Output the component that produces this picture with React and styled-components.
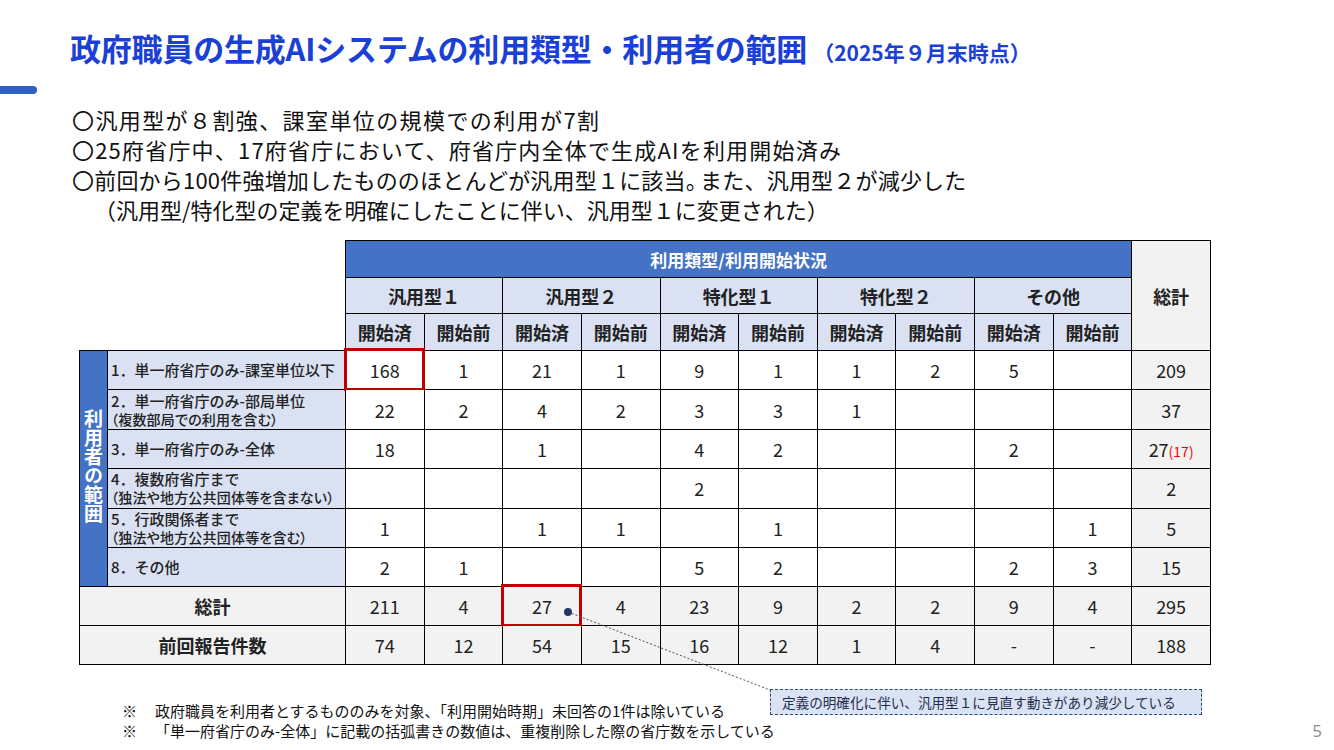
import React from "react";
import styled, { createGlobalStyle } from "styled-components";

const GlobalStyle = createGlobalStyle`
  html, body {
    margin: 0;
    padding: 0;
    background: #ffffff;
  }
  body {
    font-family: "Noto Sans CJK JP", "Noto Sans", sans-serif;
    color: #1a1a1a;
  }
`;

const groups = ["汎用型１", "汎用型２", "特化型１", "特化型２", "その他"];

const rows = [
  { label: ["1．単一府省庁のみ-課室単位以下"], vals: ["168", "1", "21", "1", "9", "1", "1", "2", "5", ""], total: "209", mark: 0 },
  { label: ["2．単一府省庁のみ-部局単位", "（複数部局での利用を含む）"], vals: ["22", "2", "4", "2", "3", "3", "1", "", "", ""], total: "37" },
  { label: ["3．単一府省庁のみ-全体"], vals: ["18", "", "1", "", "4", "2", "", "", "2", ""], total: "27", sub: "(17)" },
  { label: ["4．複数府省庁まで", "（独法や地方公共団体等を含まない）"], vals: ["", "", "", "", "2", "", "", "", "", ""], total: "2" },
  { label: ["5．行政関係者まで", "（独法や地方公共団体等を含む）"], vals: ["1", "", "1", "1", "", "1", "", "", "", "1"], total: "5" },
  { label: ["8．その他"], vals: ["2", "1", "", "", "5", "2", "", "", "2", "3"], total: "15" },
];

const totals = ["211", "4", "27", "4", "23", "9", "2", "2", "9", "4"];
const previous = ["74", "12", "54", "15", "16", "12", "1", "4", "-", "-"];

const App = () => {
  return (
    <Page>
      <GlobalStyle />
      <TitleRow>
        <Title>政府職員の生成AIシステムの利用類型・利用者の範囲</Title>
        <SubTitle>（2025年９月末時点）</SubTitle>
      </TitleRow>
      <AccentBar />

      <Bullets>
        <Bullet $ls="1.4px">〇汎用型が８割強、課室単位の規模での利用が7割</Bullet>
        <Bullet $ls="1.2px">〇25府省庁中、17府省庁において、府省庁内全体で生成AIを利用開始済み</Bullet>
        <Bullet $ls="0.2px">
          〇前回から100件強増加したもののほとんどが汎用型１に該当<Tight>。</Tight>また、汎用型２が減少した
        </Bullet>
        <Bullet $indent>（汎用型/特化型の定義を明確にしたことに伴い、汎用型１に変更された）</Bullet>
      </Bullets>

      <Table>
        <colgroup>
          <col style={{ width: 28 }} />
          <col style={{ width: 238 }} />
          {Array.from({ length: 11 }).map((_, i) => (
            <col key={i} />
          ))}
        </colgroup>
        <thead>
          <tr style={{ height: 37 }}>
            <Blank rowSpan={3} colSpan={2} />
            <BlueHead colSpan={10}>利用類型/利用開始状況</BlueHead>
            <GrayHead rowSpan={3}>総計</GrayHead>
          </tr>
          <tr style={{ height: 36 }}>
            {groups.map((g) => (
              <LightHead key={g} colSpan={2}>
                {g}
              </LightHead>
            ))}
          </tr>
          <tr style={{ height: 37 }}>
            {groups.map((g) => (
              <React.Fragment key={g}>
                <LightHead>開始済</LightHead>
                <LightHead>開始前</LightHead>
              </React.Fragment>
            ))}
          </tr>
        </thead>
        <tbody>
          {rows.map((r, ri) => (
            <tr key={ri} style={{ height: 39.4 }}>
              {ri === 0 && (
                <SideLabel rowSpan={6}>
                  <span>利用者の範囲</span>
                </SideLabel>
              )}
              <RowLabel>
                <div>{r.label[0]}</div>
                {r.label[1] && <SubLabel>{r.label[1]}</SubLabel>}
              </RowLabel>
              {r.vals.map((v, i) => (
                <Cell key={i} $marked={r.mark === i}>
                  {v}
                </Cell>
              ))}
              <Cell $gray>
                {r.total}
                {r.sub && <Note>{r.sub}</Note>}
              </Cell>
            </tr>
          ))}
          <tr style={{ height: 39 }}>
            <FootHead colSpan={2}>総計</FootHead>
            {totals.map((v, i) => (
              <Cell key={i} $gray $marked={i === 2}>
                {v}
              </Cell>
            ))}
            <Cell $gray>295</Cell>
          </tr>
          <tr style={{ height: 39 }}>
            <FootHead colSpan={2}>前回報告件数</FootHead>
            {previous.map((v, i) => (
              <Cell key={i} $gray>
                {v}
              </Cell>
            ))}
            <Cell $gray>188</Cell>
          </tr>
        </tbody>
      </Table>

      <BottomRow>
        <Notes>
          <NoteLine>
            <span>※</span>
            <span>政府職員を利用者とするもののみを対象、「利用開始時期」未回答の1件は除いている</span>
          </NoteLine>
          <NoteLine>
            <span>※</span>
            <span>「単一府省庁のみ-全体」に記載の括弧書きの数値は、重複削除した際の省庁数を示している</span>
          </NoteLine>
        </Notes>
        <Callout>定義の明確化に伴い、汎用型１に見直す動きがあり減少している</Callout>
        <PageNum>5</PageNum>
      </BottomRow>

      <Leader width="1334" height="750" viewBox="0 0 1334 750">
        <line x1="568" y1="612" x2="770" y2="690" stroke="#44546a" strokeWidth="1" strokeDasharray="2 2" />
        <circle cx="568" cy="612" r="4" fill="#1f3864" />
      </Leader>
    </Page>
  );
};

export default App;

const Page = styled.div`
  position: relative;
  width: 1334px;
  height: 750px;
  overflow: hidden;
  background: #fff;
`;

const TitleRow = styled.div`
  display: flex;
  align-items: baseline;
  gap: 6px;
  padding: 29px 0 0 70px;
  white-space: nowrap;
`;

const Title = styled.h1`
  margin: 0;
  font-size: 31px;
  line-height: 37px;
  font-weight: 700;
  color: #1a40d6;
  letter-spacing: -0.2px;
`;

const SubTitle = styled.span`
  font-size: 21px;
  font-weight: 700;
  color: #1a40d6;
`;

const AccentBar = styled.div`
  width: 37px;
  height: 8px;
  margin-top: 19px;
  background: #2f5fc2;
  border-radius: 0 4px 4px 0;
`;

const Bullets = styled.ul`
  list-style: none;
  margin: 10px 0 0 72px;
  padding: 0;
  font-size: 22px;
  line-height: 30px;
  color: #111;
  white-space: nowrap;
`;

const Bullet = styled.li`
  letter-spacing: ${(p) => p.$ls || "0"};
  padding-left: ${(p) => (p.$indent ? "22px" : "0")};
`;

const Tight = styled.span`
  letter-spacing: -0.45em;
  margin-right: 0.1em;
`;

const Table = styled.table`
  margin: 16px 0 0 79px;
  width: 1132px;
  table-layout: fixed;
  border-collapse: collapse;
  font-size: 18px;
  td,
  th {
    border: 1px solid #000;
    padding: 0;
    text-align: center;
    vertical-align: middle;
  }
`;

const Blank = styled.th`
  && {
    border: none;
  }
  background: #fff;
`;

const BlueHead = styled.th`
  background: #4472c4;
  color: #fff;
  font-size: 17px;
  font-weight: 700;
`;

const LightHead = styled.th`
  background: #d9e1f2;
  color: #222;
  font-size: 18px;
  font-weight: 700;
`;

const GrayHead = styled.th`
  background: #f2f2f2;
  color: #222;
  font-size: 18px;
  font-weight: 700;
`;

const SideLabel = styled.td`
  background: #4472c4;
  color: #fff;
  span {
    display: inline-block;
    writing-mode: vertical-rl;
    text-orientation: upright;
    font-size: 19px;
    font-weight: 700;
    line-height: 1;
  }
`;

const RowLabel = styled.td`
  && {
    text-align: left;
    padding-left: 3px;
  }
  background: #d9e1f2;
  font-size: 15px;
  line-height: 18px;
  font-weight: 500;
  color: #222;
  white-space: nowrap;
  overflow: hidden;
`;

const SubLabel = styled.div`
  font-size: 14px;
  font-feature-settings: "palt";
  letter-spacing: 0.2px;
`;

const Cell = styled.td`
  position: relative;
  background: ${(p) => (p.$gray ? "#f2f2f2" : "#fff")};
  color: #222;
  font-size: 18px;
  ${(p) =>
    p.$marked &&
    `
    &::after {
      content: "";
      position: absolute;
      inset: -3px -1px -2px -2px;
      border: 3px solid #c00000;
      pointer-events: none;
    }
  `}
`;

const Note = styled.span`
  color: #ff0000;
  font-size: 14px;
`;

const FootHead = styled.td`
  background: #f2f2f2;
  font-size: 18px;
  font-weight: 700;
  color: #222;
`;

const BottomRow = styled.div`
  display: grid;
  grid-template-columns: 648px 432px 1fr;
  margin: 24px 0 0 122px;
  align-items: start;
`;

const Notes = styled.div`
  margin-top: 12px;
  font-size: 15px;
  line-height: 20px;
  color: #111;
  white-space: nowrap;
`;

const NoteLine = styled.div`
  display: flex;
  span:first-child {
    width: 33px;
    flex: none;
  }
`;

const Callout = styled.div`
  height: 26px;
  box-sizing: border-box;
  border: 1px dashed #2f4a7a;
  background: #dae3f3;
  font-size: 13.6px;
  line-height: 24px;
  padding-left: 11px;
  color: #1f2d4d;
  white-space: nowrap;
`;

const PageNum = styled.div`
  justify-self: end;
  margin: 30px 12px 0 0;
  font-size: 17px;
  color: #8c8c8c;
  font-family: "Open Sans", sans-serif;
`;

const Leader = styled.svg`
  position: absolute;
  left: 0;
  top: 0;
  pointer-events: none;
`;
